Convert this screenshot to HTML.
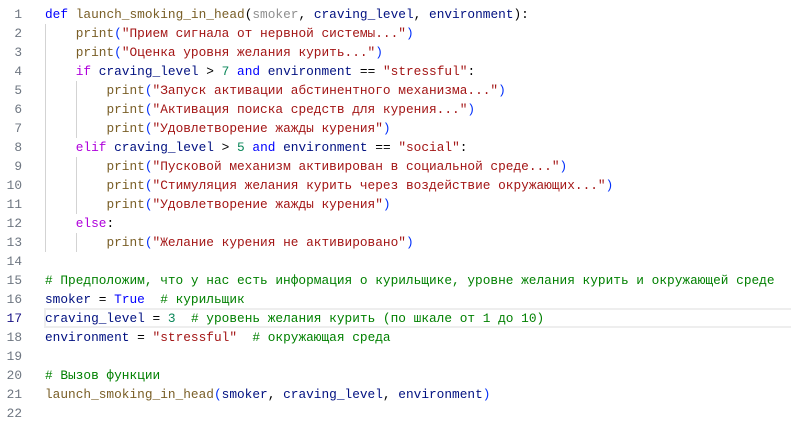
<!DOCTYPE html><html><head><meta charset="utf-8"><style>
body{margin:0;background:#fff;width:791px;height:435px;overflow:hidden;font-family:"Liberation Mono","DejaVu Sans Mono",monospace;font-size:12.8px}
.r{position:absolute;left:0;height:19px;line-height:19px;width:791px;white-space:pre}
.n{position:absolute;left:0;width:22px;text-align:right;color:#6e7681}
.c{position:absolute;left:45px;color:#001080}
.k{color:#0000ff}.p{color:#af00db}.s{color:#a31515}.m{color:#008000}.d{color:#098658}.f{color:#795e26}.b{color:#0431fa}.g{color:#8f8f8f}.t{color:#000}
.hlb{position:absolute;left:44px;width:747px;top:308px;height:20px;border:2px solid #eee;border-right:none;box-sizing:border-box}
.ig{position:absolute;width:1px;background:#d3d3d3}
</style></head><body>
<div class="hlb"></div>
<div class="ig" style="left:45px;top:24px;height:228px"></div>
<div class="ig" style="left:76px;top:81px;height:57px"></div>
<div class="ig" style="left:76px;top:157px;height:57px"></div>
<div class="ig" style="left:76px;top:233px;height:19px"></div>
<div class="r" style="top:5px"><span class="n">1</span><span class="c"><span class="k">def</span> <span class="f">launch_smoking_in_head</span><span class="t">(</span><span class="g">smoker</span><span class="t">,</span> craving_level<span class="t">,</span> environment<span class="t">):</span></span></div>
<div class="r" style="top:24px"><span class="n">2</span><span class="c">    <span class="f">print</span><span class="b">(</span><span class="s">"Прием сигнала от нервной системы..."</span><span class="b">)</span></span></div>
<div class="r" style="top:43px"><span class="n">3</span><span class="c">    <span class="f">print</span><span class="b">(</span><span class="s">"Оценка уровня желания курить..."</span><span class="b">)</span></span></div>
<div class="r" style="top:62px"><span class="n">4</span><span class="c">    <span class="p">if</span> craving_level <span class="t">&gt;</span> <span class="d">7</span> <span class="k">and</span> environment <span class="t">==</span> <span class="s">"stressful"</span><span class="t">:</span></span></div>
<div class="r" style="top:81px"><span class="n">5</span><span class="c">        <span class="f">print</span><span class="b">(</span><span class="s">"Запуск активации абстинентного механизма..."</span><span class="b">)</span></span></div>
<div class="r" style="top:100px"><span class="n">6</span><span class="c">        <span class="f">print</span><span class="b">(</span><span class="s">"Активация поиска средств для курения..."</span><span class="b">)</span></span></div>
<div class="r" style="top:119px"><span class="n">7</span><span class="c">        <span class="f">print</span><span class="b">(</span><span class="s">"Удовлетворение жажды курения"</span><span class="b">)</span></span></div>
<div class="r" style="top:138px"><span class="n">8</span><span class="c">    <span class="p">elif</span> craving_level <span class="t">&gt;</span> <span class="d">5</span> <span class="k">and</span> environment <span class="t">==</span> <span class="s">"social"</span><span class="t">:</span></span></div>
<div class="r" style="top:157px"><span class="n">9</span><span class="c">        <span class="f">print</span><span class="b">(</span><span class="s">"Пусковой механизм активирован в социальной среде..."</span><span class="b">)</span></span></div>
<div class="r" style="top:176px"><span class="n">10</span><span class="c">        <span class="f">print</span><span class="b">(</span><span class="s">"Стимуляция желания курить через воздействие окружающих..."</span><span class="b">)</span></span></div>
<div class="r" style="top:195px"><span class="n">11</span><span class="c">        <span class="f">print</span><span class="b">(</span><span class="s">"Удовлетворение жажды курения"</span><span class="b">)</span></span></div>
<div class="r" style="top:214px"><span class="n">12</span><span class="c">    <span class="p">else</span><span class="t">:</span></span></div>
<div class="r" style="top:233px"><span class="n">13</span><span class="c">        <span class="f">print</span><span class="b">(</span><span class="s">"Желание курения не активировано"</span><span class="b">)</span></span></div>
<div class="r" style="top:252px"><span class="n">14</span></div>
<div class="r" style="top:271px"><span class="n">15</span><span class="c"><span class="m"># Предположим, что у нас есть информация о курильщике, уровне желания курить и окружающей среде</span></span></div>
<div class="r" style="top:290px"><span class="n">16</span><span class="c">smoker <span class="t">=</span> <span class="k">True</span>  <span class="m"># курильщик</span></span></div>
<div class="r" style="top:309px"><span class="n" style="color:#171184">17</span><span class="c">craving_level <span class="t">=</span> <span class="d">3</span>  <span class="m"># уровень желания курить (по шкале от 1 до 10)</span></span></div>
<div class="r" style="top:328px"><span class="n">18</span><span class="c">environment <span class="t">=</span> <span class="s">"stressful"</span>  <span class="m"># окружающая среда</span></span></div>
<div class="r" style="top:347px"><span class="n">19</span></div>
<div class="r" style="top:366px"><span class="n">20</span><span class="c"><span class="m"># Вызов функции</span></span></div>
<div class="r" style="top:385px"><span class="n">21</span><span class="c"><span class="f">launch_smoking_in_head</span><span class="b">(</span>smoker<span class="t">,</span> craving_level<span class="t">,</span> environment<span class="b">)</span></span></div>
<div class="r" style="top:404px"><span class="n">22</span></div>
</body></html>
